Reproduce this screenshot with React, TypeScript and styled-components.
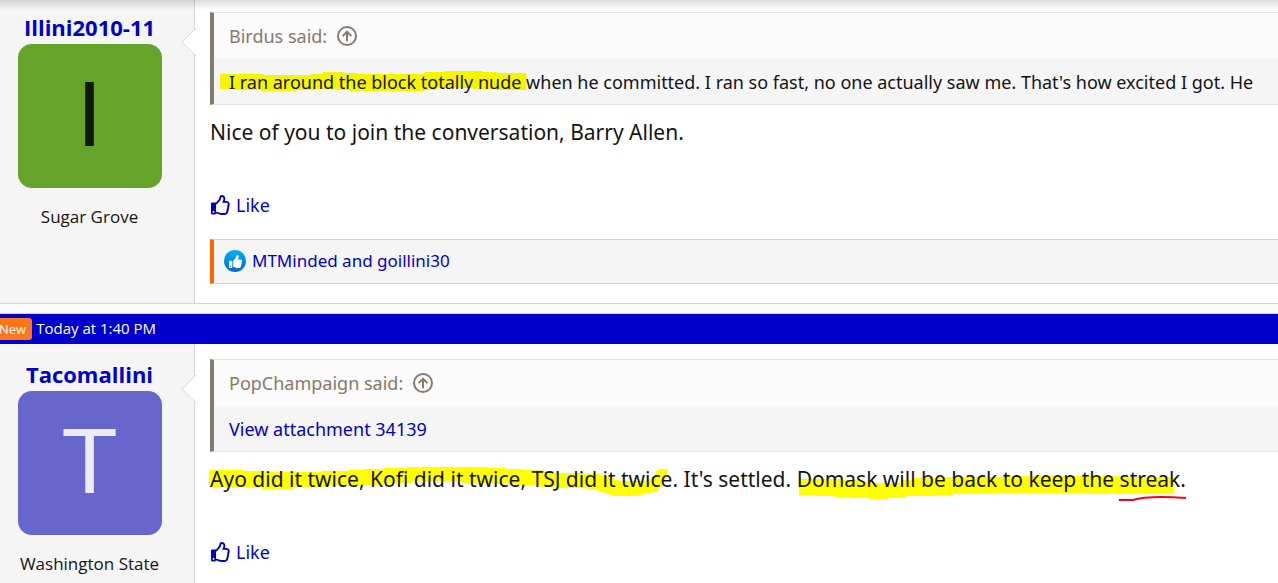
import React from 'react';
import styled, { createGlobalStyle } from 'styled-components';
import { FaRegThumbsUp, FaThumbsUp } from 'react-icons/fa';

const GlobalStyle = createGlobalStyle`
  *, *::before, *::after { box-sizing: border-box; }
  body {
    margin: 0;
    background: #fafafa;
    color: #141414;
    font-family: "Noto Sans", "Open Sans", sans-serif;
    font-size: 18px;
    line-height: 28px;
    overflow-x: hidden;
  }
  a { color: #0000cc; text-decoration: none; }
  a:hover { text-decoration: underline; }
`;

const Thread = styled.main`
  position: relative;
  width: 100%;
  overflow: hidden;
`;

const HeaderShadow = styled.div`
  position: absolute;
  inset: 0 0 auto 0;
  height: 10px;
  background: linear-gradient(rgba(0, 0, 0, 0.14), rgba(0, 0, 0, 0.09) 30%, rgba(0, 0, 0, 0));
  pointer-events: none;
  z-index: 3;
`;

const Post = styled.article<{ $top: number }>`
  --post-top: ${(p) => p.$top}px;
  display: flex;
  background: #fff;
  border-bottom: 1px solid #cbd5e4;
`;

const UserCell = styled.aside`
  position: relative;
  flex: 0 0 195px;
  padding: var(--post-top) 15px 20px 0;
  display: flex;
  flex-direction: column;
  align-items: center;
  background: #f5f5f5;
  border-right: 1px solid #d8d8d8;
`;

const Pointer = styled.svg`
  position: absolute;
  right: -2px;
  top: calc(var(--post-top) + 15px);
  width: 15px;
  height: 30px;
`;

const UserName = styled.a`
  margin-bottom: 2px;
  font-family: "Open Sans", sans-serif;
  font-size: 22px;
  line-height: 30px;
  font-weight: 700;
`;

const Avatar = styled.a<{ $bg: string; $fg: string }>`
  display: flex;
  align-items: center;
  justify-content: center;
  width: 144px;
  height: 144px;
  border-radius: 14px;
  background: ${(p) => p.$bg};
  && { color: ${(p) => p.$fg}; }
  font-family: "Liberation Sans", sans-serif;
  font-size: 92px;
  line-height: 140px;
  padding-bottom: 4px;
`;

const Place = styled.div`
  margin-top: 16px;
  font-family: "Open Sans", sans-serif;
  font-size: 17px;
  line-height: 26px;
`;

const MainCell = styled.div`
  flex: 1;
  min-width: 0;
  padding: var(--post-top) 0 19px 15px;
`;

const Quote = styled.blockquote`
  margin: 0;
  border: 1px solid #e4e4e4;
  border-left: 4px solid #857a6e;
  border-right: 0;
  background: #f5f5f5;
`;

const QuoteHead = styled.div`
  display: flex;
  align-items: center;
  gap: 10px;
  padding: 9px 15px;
  background: #fbfbfb;
  color: #857a6e;
`;

const QuoteBody = styled.div`
  position: relative;
  z-index: 0;
  padding: 9px 0 8px 15px;
  white-space: nowrap;
  overflow: hidden;
`;

const Message = styled.div`
  position: relative;
  z-index: 0;
  margin-top: 11px;
  font-size: 21px;
  line-height: 32px;
`;

const Marked = styled.span`
  position: relative;
  display: inline-block;
`;

const MarkerInk = styled.svg<{ $left: number; $right: number }>`
  position: absolute;
  z-index: -1;
  top: 0;
  left: ${(p) => -p.$left}px;
  width: calc(100% + ${(p) => p.$left + p.$right}px);
  height: 40px;
`;

const LikeButton = styled.button`
  display: flex;
  align-items: center;
  gap: 5px;
  margin-top: 43px;
  padding: 0 0 0 1px;
  border: 0;
  background: none;
  color: #0000cc;
  font: inherit;
  cursor: pointer;
`;

const Reactions = styled.div`
  display: flex;
  align-items: center;
  gap: 6px;
  margin-top: 20px;
  padding: 7px 10px 8px;
  border: 1px solid #cbd5e4;
  border-left: 4px solid #ff6600;
  border-right: 0;
  background: #f5f5f5;
  font-size: 17px;
`;

const ReactionBadge = styled.span`
  display: flex;
  align-items: center;
  justify-content: center;
  width: 22px;
  height: 22px;
  border-radius: 50%;
  color: #fff;
  background: linear-gradient(#00b0f4, #0068d8);
`;

const DateBar = styled.header`
  display: flex;
  align-items: center;
  gap: 4px;
  margin-top: 9px;
  height: 31px;
  border-top: 1px solid #cbd5e4;
  background: #0000cc;
  color: #fff;
  font-family: "Open Sans", sans-serif;
  font-size: 15px;
  line-height: 22px;

  time { padding-bottom: 2px; }
`;

const NewLabel = styled.span`
  margin-left: -1px;
  padding: 0 6px 0 0;
  border-radius: 0 3px 3px 0;
  background: #ff7518;
  font-size: 13px;
  font-weight: 500;
`;

const ArrowCircle = () => (
  <svg width="20" height="20" viewBox="0 0 20 20" fill="none" stroke="#857a6e" strokeWidth="2" aria-hidden="true">
    <circle cx="10" cy="10" r="9" />
    <path d="M10 15.2V5.8M5.6 10.1L10 5.7l4.4 4.4" />
  </svg>
);

interface UserProps {
  name: string;
  place: string;
  bg: string;
  fg: string;
}

const User = ({ name, place, bg, fg }: UserProps) => (
  <UserCell>
    <UserName href="#member">{name}</UserName>
    <Avatar href="#member" $bg={bg} $fg={fg}>{name[0]}</Avatar>
    <Place>{place}</Place>
    <Pointer viewBox="0 0 15 30" aria-hidden="true">
      <path d="M15 1L1 15l14 14z" fill="#fff" />
      <path d="M15 1L1 15l14 14" fill="none" stroke="#d8d8d8" />
    </Pointer>
  </UserCell>
);

const Like = () => (
  <LikeButton type="button">
    <FaRegThumbsUp size={20} aria-hidden="true" />
    Like
  </LikeButton>
);

export default function App() {
  return (
    <>
      <GlobalStyle />
      <Thread>
        <HeaderShadow />
        <Post $top={12}>
          <User name="Illini2010-11" place="Sugar Grove" bg="#66a329" fg="#0f1806" />
          <MainCell>
            <Quote>
              <QuoteHead>
                Birdus said: <ArrowCircle />
              </QuoteHead>
              <QuoteBody>
                <Marked>
                  <MarkerInk $left={9} $right={6} viewBox="0 0 314 40" preserveAspectRatio="none" aria-hidden="true">
                    <path
                      fill="#f5f500"
                      d="M0 6H45V7H93V6H105V4H125V5H141V6H209V4H229V3H268V4H283V5H313V22H282V21H258V20H222V22H209V23H133V22H118V21H97V22H78V23H42V22H15V21H0z"
                    />
                  </MarkerInk>
                  I ran around the block totally nude
                </Marked>{' '}
                when he committed. I ran so fast, no one actually saw me. That's how excited I got. He
              </QuoteBody>
            </Quote>
            <Message>Nice of you to join the conversation, Barry Allen.</Message>
            <Like />
            <Reactions>
              <ReactionBadge>
                <FaThumbsUp size={13} aria-hidden="true" />
              </ReactionBadge>
              <a href="#reactions">MTMinded and goillini30</a>
            </Reactions>
          </MainCell>
        </Post>

        <DateBar>
          <NewLabel>New</NewLabel>
          <time>Today at 1:40 PM</time>
        </DateBar>
        <Post $top={15}>
          <User name="Tacomallini" place="Washington State" bg="#6666cc" fg="#ebebfa" />
          <MainCell>
            <Quote>
              <QuoteHead>
                PopChampaign said: <ArrowCircle />
              </QuoteHead>
              <QuoteBody>
                <a href="#attachment">View attachment 34139</a>
              </QuoteBody>
            </Quote>
            <Message>
              <Marked>
                <MarkerInk $left={1} $right={0} viewBox="0 0 476 40" preserveAspectRatio="none" aria-hidden="true">
                  <path
                    fill="#ffff00"
                    d="M0 7H36V8H58V9H116V8H143V7H160V6H179V5H203V4H286V5H305V6H322V7H342V9H353V10H386V11H402V13H415V16L423 18L450 18L458 14L459 8L464 6H471V13L466 20L461 28L447 31L438 33H417L404 29L398 27L385 25H356V24H339V22H316V21H293V20H259V18H208V20H180V22H144V23H119V24H86V26H54V25H42V24H0z"
                  />
                </MarkerInk>
                Ayo did it twice, Kofi did it twice, TSJ did it twice
              </Marked>
              . It's settled.{' '}
              <Marked>
                <MarkerInk $left={0} $right={0} viewBox="0 0 392 40" preserveAspectRatio="none" aria-hidden="true">
                  <path
                    fill="#ffff00"
                    d="M2 16H46V17H62V19H78V20H105V17H117V15H140V14H210V13H325V14H380V31H291V30H191V31H158V32H141V33H109V35H91V36H73V35H56V34H38V33H21V32H2z"
                  />
                  <path fill="none" stroke="#f5001d" strokeWidth="2" d="M324 37H338C348 34 362 33 392 35" />
                </MarkerInk>
                Domask will be back to keep the streak.
              </Marked>
            </Message>
            <Like />
          </MainCell>
        </Post>
      </Thread>
    </>
  );
}
